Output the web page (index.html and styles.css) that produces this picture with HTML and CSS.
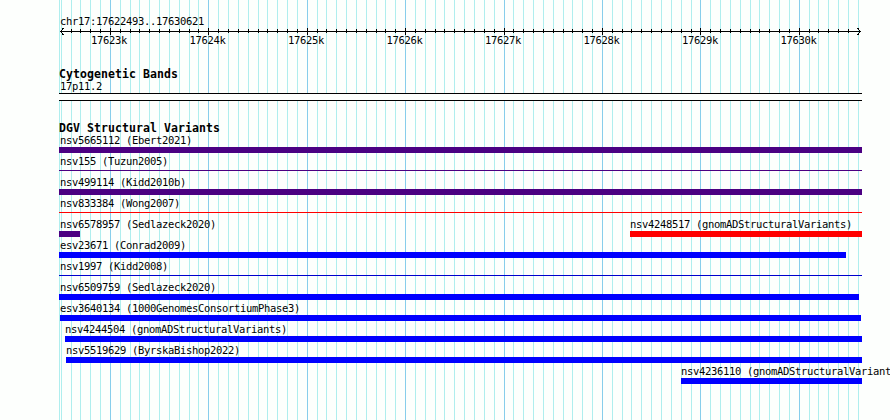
FILE: index.html
```html
<!DOCTYPE html>
<html lang="en">
<head>
<meta charset="utf-8">
<title>chr17:17622493..17630621</title>
<link rel="stylesheet" href="styles.css">
</head>
<body>
<main class="browser">
  <svg class="grid" width="890" height="420" aria-hidden="true">
    <path id="minor" class="minor"/>
    <path id="major" class="major"/>
  </svg>
  <header class="ruler">
    <div class="region">chr17:17622493..17630621</div>
    <svg class="axis" width="804" height="9" aria-hidden="true">
      <path d="M1 4.5H802M4.5 1L1.5 4.5L4.5 8M798.5 1L801.5 4.5L798.5 8"/>
      <path id="ticks"/>
    </svg>
    <div class="scale"><span>17623k</span><span>17624k</span><span>17625k</span><span>17626k</span><span>17627k</span><span>17628k</span><span>17629k</span><span>17630k</span></div>
  </header>
  <section class="bands">
    <h2>Cytogenetic Bands</h2>
    <div class="label">17p11.2</div>
    <div class="band"></div>
  </section>
  <section class="variants">
    <h2>DGV Structural Variants</h2>
    <div id="rows"></div>
  </section>
</main>
<script src="script.js"></script>
</body>
</html>
```
FILE: styles.css
```css
* { box-sizing: border-box; }
body { margin: 0; background: #fdfffd; }
.browser {
  position: relative;
  width: 890px;
  height: 420px;
  padding: 15px 0 0 59px;
  overflow: hidden;
  color: #000;
  font: 10.5px/13px "DejaVu Sans Mono", monospace;
  letter-spacing: -0.321px;
  white-space: nowrap;
}
.grid { position: absolute; inset: 0; }
.minor, .major { fill: none; shape-rendering: crispEdges; }
.minor { stroke: #afeeee; }
.major { stroke: #87ceeb; }
.ruler, .bands, .variants { position: relative; }
.ruler { height: 53px; }
.region { height: 12px; padding-left: 1px; line-height: 13px; }
.axis { display: block; }
.axis path { fill: none; stroke: #000; shape-rendering: crispEdges; }
.scale { display: flex; margin: -2px 0 0 32px; }
.scale span { width: 98.5px; flex: none; }
h2 {
  height: 12px;
  margin: 0;
  font-size: 11.5px;
  line-height: 13px;
  letter-spacing: 0.077px;
}
.bands { height: 54px; }
.label { height: 13px; padding-left: 1px; }
.band {
  width: 803px;
  height: 8px;
  border: solid #000;
  border-width: 1px 0;
  background: #fdfffd;
}
.row { display: flex; height: 21px; }
.feature { flex: none; }
.bar { height: 6px; background: currentColor; }
.bar.thin { height: 1px; margin-top: 2px; }
.feature .label { color: #000; }
.indigo { color: #4b0082; }
.red { color: #f00; }
.blue { color: #00f; }
.navy { color: #0000cd; }
```
FILE: script.js
```js
const minorX = [59, 61, 858];
const majorX = [110, 208, 307, 405, 504, 602, 700, 799];
const stops = [71,80,90,100,120,130,139,149,159,169,179,189,198,218,228,238,248,258,267,277,287,297,317,326,336,346,356,366,376,385,395,415,425,435,444,454,464,474,484,494,513,523,533,543,553,563,572,582,592,612,622,631,641,651,661,671,681,691,710,720,730,740,750,759,769,779,789,809,818,828,838,848];
const line = (x, y1, y2) => `M${x + 0.5} ${y1}V${y2}`;
document.getElementById("minor").setAttribute("d", minorX.concat(stops).map(x => line(x, 0, 420)).join(""));
document.getElementById("major").setAttribute("d", majorX.map(x => line(x, 0, 420)).join(""));
document.getElementById("ticks").setAttribute("d",
  stops.map(x => line(x - 59, 2, 6)).join("") + majorX.map(x => line(x - 59, 1, 8)).join(""));

const rows = [
  [["nsv5665112 (Ebert2021)", 59, 862, "indigo"]],
  [["nsv155 (Tuzun2005)", 59, 862, "indigo", true]],
  [["nsv499114 (Kidd2010b)", 59, 862, "indigo"]],
  [["nsv833384 (Wong2007)", 59, 862, "red", true]],
  [["nsv6578957 (Sedlazeck2020)", 59, 80, "indigo"], ["nsv4248517 (gnomADStructuralVariants)", 630, 862, "red"]],
  [["esv23671 (Conrad2009)", 59, 846, "blue"]],
  [["nsv1997 (Kidd2008)", 59, 862, "navy", true]],
  [["nsv6509759 (Sedlazeck2020)", 59, 859, "blue"]],
  [["esv3640134 (1000GenomesConsortiumPhase3)", 60, 861, "blue"]],
  [["nsv4244504 (gnomADStructuralVariants)", 65, 862, "blue"]],
  [["nsv5519629 (ByrskaBishop2022)", 66, 862, "blue"]],
  [["nsv4236110 (gnomADStructuralVariants)", 681, 862, "blue"]]
];
const container = document.getElementById("rows");
for (const features of rows) {
  const row = document.createElement("div");
  row.className = "row";
  let cursor = 59;
  for (const [name, start, end, color, thin] of features) {
    const feature = document.createElement("div");
    feature.className = `feature ${color}`;
    feature.style.marginLeft = `${start - cursor}px`;
    feature.style.width = `${end - start}px`;
    const label = document.createElement("div");
    label.className = "label";
    label.style.paddingLeft = start === 59 ? "1px" : "0";
    label.textContent = name;
    const bar = document.createElement("div");
    bar.className = thin ? "bar thin" : "bar";
    feature.append(label, bar);
    row.append(feature);
    cursor = end;
  }
  container.append(row);
}
```
